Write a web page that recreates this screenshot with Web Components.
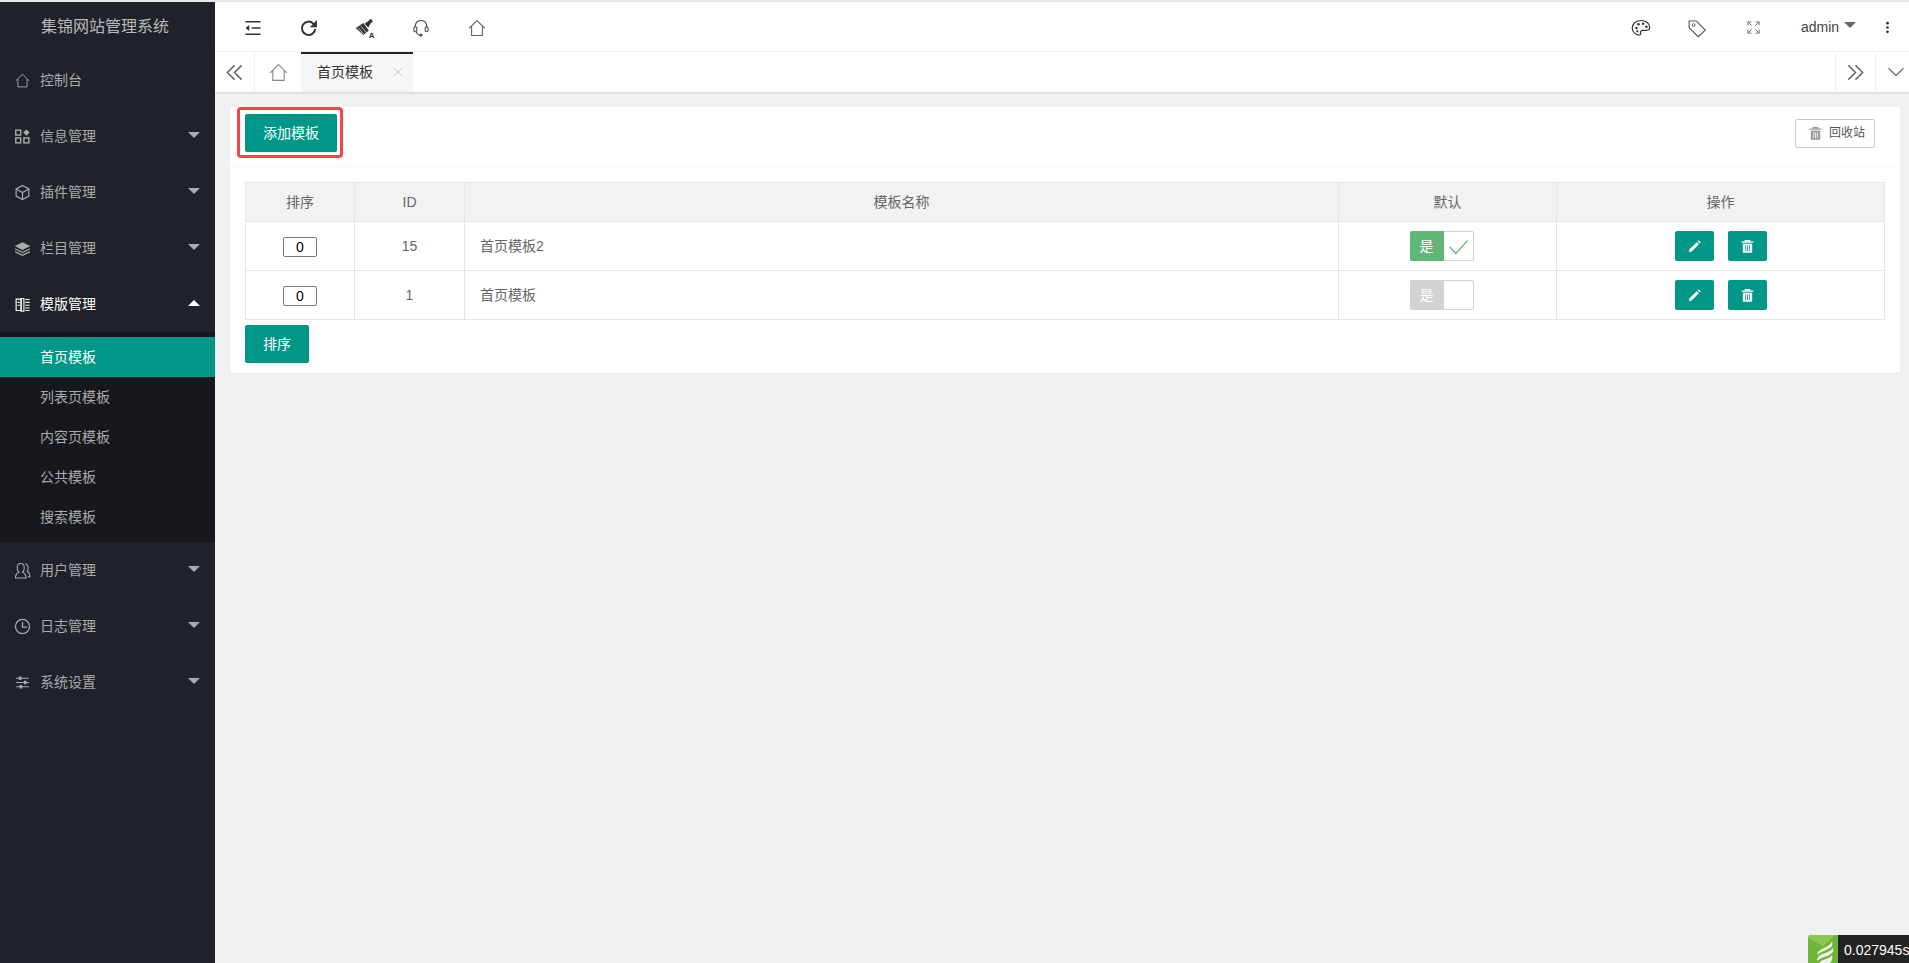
<!DOCTYPE html>
<html lang="zh-CN"><head><meta charset="utf-8"><title>集锦网站管理系统</title>
<style>
html,body{margin:0;height:100%;overflow:hidden}
body{font:14px/20px "Liberation Sans","Noto Sans CJK SC",sans-serif;color:#666;background:#f1f1f1}
</style></head><body>
<x-app>
  <x-sidebar slot="side" title-text="集锦网站管理系统">
    <x-nav-item icon="home" label="控制台" plain></x-nav-item>
    <x-nav-item icon="apps" label="信息管理"></x-nav-item>
    <x-nav-item icon="cube" label="插件管理"></x-nav-item>
    <x-nav-item icon="layers" label="栏目管理"></x-nav-item>
    <x-nav-item icon="template" label="模版管理" open>
      <x-sub-item active>首页模板</x-sub-item>
      <x-sub-item>列表页模板</x-sub-item>
      <x-sub-item>内容页模板</x-sub-item>
      <x-sub-item>公共模板</x-sub-item>
      <x-sub-item>搜索模板</x-sub-item>
    </x-nav-item>
    <x-nav-item icon="user" label="用户管理"></x-nav-item>
    <x-nav-item icon="clock" label="日志管理"></x-nav-item>
    <x-nav-item icon="sliders" label="系统设置"></x-nav-item>
  </x-sidebar>
  <x-topbar slot="top"></x-topbar>
  <x-tabbar slot="top"></x-tabbar>
  <x-template-card></x-template-card>
</x-app>
<x-trace></x-trace>
<script>
const ICONS = {
  home:'<path d="M2.500 12.500 12 3l9.500 9.500M5.500 10v11h13V10" fill="none" stroke="currentColor" stroke-width="1.300"/>',
  apps:'<g fill="none" stroke="currentColor" stroke-width="2"><rect x="2.500" y="3" width="7" height="7"/><rect x="2.500" y="14" width="7" height="7"/><rect x="14" y="14" width="7" height="7"/></g><path d="M17.500 2 22 6.500 17.500 11 13 6.500z" fill="currentColor"/>',
  cube:'<g fill="none" stroke="currentColor" stroke-width="1.700"><path d="M12 2 21 7v10l-9 5-9-5V7z"/><path d="M3.500 7.500 12 12l8.500-4.500M12 12v10"/></g>',
  layers:'<g fill="currentColor"><path d="M12 3 23 8.500 12 14 1 8.500z"/><path d="M1.500 11.500 12 16.500l10.500-5V13.500L12 18.500 1.500 13.500z"/><path d="M1.500 15.500 12 20.500l10.500-5v2L12 22.500l-10.500-5z"/></g>',
  template:'<g fill="none" stroke="currentColor" stroke-width="1.600"><path d="M3 4.500h7v16H3z"/><path d="M10 3.500h4v18h-4z"/></g><path d="M16 5h6M16 9h6M16 13h6M16 17h6M16 20.500h6M5 9h3M5 13h3" stroke="currentColor" stroke-width="1.500" fill="none"/>',
  user:'<g fill="none" stroke="currentColor" stroke-width="1.500"><path d="M2 22.500c0-4.500 2.500-7 5-8-2-1.500-2.500-3.500-2.500-6C4.500 4.500 6.500 2 9.500 2s5 2.500 5 6.500c0 2.500-.5 4.500-2.500 6 2.500 1 5 3.500 5 8z"/><path d="M15.500 2.500c3 .5 4.500 3 4.500 6 0 2-.5 3.500-1.500 5 2.500 1 4 3.500 4 7.500h-3"/></g>',
  clock:'<g fill="none" stroke="currentColor" stroke-width="1.800"><circle cx="12" cy="12" r="10"/><path d="M12 5.500V13h6.500"/></g>',
  sliders:'<path d="M3 6h18M3 12h18M3 18h18" stroke="currentColor" stroke-width="1.700"/><g fill="currentColor"><rect x="7" y="3.500" width="3.500" height="5"/><rect x="14" y="9.500" width="3.500" height="5"/><rect x="8" y="15.500" width="3.500" height="5"/></g>',
  shrink:'<path d="M3 4.500h18M10.500 12H21M3 19.500h18" stroke="currentColor" stroke-width="2"/><path d="M7.500 8.500v7L3 12z" fill="currentColor"/>',
  refresh:'<path d="M19.500 13a8 8 0 1 1-2.300-6.300L19 8.500" fill="none" stroke="currentColor" stroke-width="2.400"/><path d="M21.500 2.500v8.500H13z" fill="currentColor"/>',
  brush:'<g fill="currentColor"><path d="M1 12 10 6l6.500 9-6.500 5.500z"/><path d="M11.500 7 16 3.500 19 1l2.500 3-3 3-2.500 4.500z" /></g><path d="M4 11.500l6.500 8M7 9.500l6.500 8" stroke="#fff" stroke-width=".8"/><text x="16.500" y="23.500" font-size="9.500" font-weight="700" fill="currentColor" font-family="Liberation Sans">A</text>',
  headset:'<g fill="none" stroke="currentColor" stroke-width="1.300"><path d="M5 11C5 5.500 8 3 12 3s7 2.500 7 8"/><rect x="3.500" y="10.500" width="3.500" height="6" rx="1.700"/><rect x="17" y="10.500" width="3.500" height="6" rx="1.700"/><path d="M6.500 16.500c.5 3 2.500 4 4.500 4"/><circle cx="12" cy="20.500" r="1.200"/></g>',
  palette:'<path d="M12 3C6 3 1.500 7 1.500 12c0 5 4.500 8.500 8 8.500 2 0 2.500-1 2-2.500-.5-2 .5-3.200 2.500-3.200h4c2.500 0 4.500-1 4.500-3.300C22.500 6.500 18 3 12 3z" fill="none" stroke="currentColor" stroke-width="1.400"/><g fill="currentColor"><circle cx="6.500" cy="12" r="1.500"/><circle cx="9" cy="7.500" r="1.500"/><circle cx="14.500" cy="7" r="1.500"/><circle cx="18.500" cy="10.500" r="1.500"/><circle cx="7.500" cy="16" r="1.300"/></g>',
  tag:'<path d="M2.500 3.500h8.500L22 14.500 13.500 22.500 2.500 11.500z" fill="none" stroke="currentColor" stroke-width="1.300" stroke-linejoin="round"/><circle cx="8" cy="8.500" r="1.700" fill="none" stroke="currentColor" stroke-width="1.100"/>',
  full:'<g fill="none" stroke="currentColor" stroke-width="1.500"><path d="M3 8.500V3h5.500M3.500 3.500l5.500 5.500M15.500 3H21v5.500M20.500 3.500 15 9M3 15.500V21h5.500M3.500 20.500 9 15M21 15.500V21h-5.500M20.500 20.500 15 15"/></g>',
  dots:'<g fill="currentColor"><circle cx="12" cy="4" r="2.500"/><circle cx="12" cy="12" r="2.500"/><circle cx="12" cy="20" r="2.500"/></g>',
  dleft:'<path d="M12 3 3 12l9 9M21 3l-9 9 9 9" fill="none" stroke="currentColor" stroke-width="1.900"/>',
  dright:'<path d="M3 3l9 9-9 9M12 3l9 9-9 9" fill="none" stroke="currentColor" stroke-width="1.900"/>',
  down:'<path d="M2 7l10 10L22 7" fill="none" stroke="currentColor" stroke-width="1.500"/>',
  close:'<path d="M4 4l16 16M20 4 4 20" fill="none" stroke="currentColor" stroke-width="1.800"/>',
  check:'<path d="M2 12.500 9 20 22.500 5" fill="none" stroke="currentColor" stroke-width="1.400"/>',
  pencil:'<path d="M4 16.500 15.500 5l3.500 3.500L7.500 20 3 21z" fill="currentColor"/><path d="M17 3.500 18.500 2 22 5.500 20.500 7z" fill="currentColor"/>',
  trash:'<path d="M2.500 5h19M8.500 5V2.500h7V5" fill="none" stroke="currentColor" stroke-width="2"/><path d="M4.500 7.500h15V22h-15z" fill="currentColor"/><path d="M9 10v9.500M12 10v9.500M15 10v9.500" stroke="var(--cut,#009688)" stroke-width="1.300"/>'
};
const iconTpl=document.createElement('template');
iconTpl.innerHTML='<style>:host{display:inline-flex;flex:none;width:var(--s,16px);height:var(--s,16px);vertical-align:middle}svg{width:100%;height:100%;display:block;overflow:visible}</style><svg viewBox="0 0 24 24"></svg>';
customElements.define('x-icon',class extends HTMLElement{
  static get observedAttributes(){return ['name'];}
  constructor(){super();this.attachShadow({mode:'open'}).appendChild(iconTpl.content.cloneNode(true));}
  attributeChangedCallback(){this.shadowRoot.querySelector('svg').innerHTML=ICONS[this.getAttribute('name')]||'';}
});
function define(name, html, extra){
  const t=document.createElement('template'); t.innerHTML=html;
  customElements.define(name, class extends HTMLElement{
    constructor(){super();this.attachShadow({mode:'open'}).appendChild(t.content.cloneNode(true));}
    connectedCallback(){ extra && extra(this, this.shadowRoot); }
  });
}

define('x-app',`<style>
:host{display:grid;grid-template-columns:215px 1fr;grid-template-rows:auto 1fr;height:963px;box-sizing:border-box;border-top:2px solid #e8e8e8}
.side{grid-row:1/3;display:block}
.top{display:block;min-width:0}
.main{padding:15px 9px 15px 15px;min-width:0}
</style><div class="side"><slot name="side"></slot></div><div class="top"><slot name="top"></slot></div><div class="main"><slot></slot></div>`);

define('x-sidebar',`<style>
:host{display:block;height:100%;background:#20222a}
.logo{height:50px;box-sizing:border-box;padding:0 0 0 41px;font-size:16px;line-height:50px;color:#b9babd;white-space:nowrap}
</style><div class="logo"></div><slot></slot>`,(h,s)=>{s.querySelector('.logo').textContent=h.getAttribute('title-text');});

define('x-nav-item',`<style>
:host{display:block}
.row{height:56px;display:flex;align-items:center;padding:0 15px;color:#a9aaad;position:relative}
:host([open]) .row{color:#fff}
x-icon{--s:17px;margin:0 9px 0 -1px}
.label{flex:1;white-space:nowrap}
.caret{width:0;height:0;border:6px solid transparent;border-top-color:currentColor;border-bottom:0;margin-bottom:3px}
:host([open]) .caret{border-top:0;border-bottom:6px solid currentColor}
:host([plain]) .caret{display:none}
.sub{display:none;background:#16181d;padding:5px 0}
:host([open]) .sub{display:block}
</style><div class="row"><x-icon></x-icon><span class="label"></span><span class="caret"></span></div><div class="sub"><slot></slot></div>`,
(h,s)=>{s.querySelector('x-icon').setAttribute('name',h.getAttribute('icon'));s.querySelector('.label').textContent=h.getAttribute('label');});

define('x-sub-item',`<style>
:host{display:block;height:40px;line-height:40px;padding-left:40px;color:#a9aaad}
:host([active]){background:#009688;color:#fff}
</style><slot></slot>`);

define('x-topbar',`<style>
:host{display:flex;justify-content:space-between;height:50px;box-sizing:border-box;border-bottom:1px solid #f2f2f2;background:#fff;color:#333}
.g{display:flex;align-items:center}
.l{padding-left:10px}
.i{width:56px;height:100%;display:flex;align-items:center;justify-content:center}
.i x-icon{--s:20px;transform:translateY(1px)}
.admin{width:85px;padding-left:20px;box-sizing:border-box;display:flex;align-items:center;height:100%;color:#444}
.car{width:0;height:0;border:6px solid transparent;border-top-color:#666;border-bottom:0;margin-left:5px;margin-top:-3px}
.dots{width:43px;display:flex;justify-content:center;color:#333}
.dots x-icon{--s:13px;transform:translateY(1px)}
</style>
<div class="g l">
 <span class="i"><x-icon name="shrink"></x-icon></span>
 <span class="i"><x-icon name="refresh"></x-icon></span>
 <span class="i"><x-icon name="brush"></x-icon></span>
 <span class="i" style="color:#444"><x-icon name="headset"></x-icon></span>
 <span class="i" style="color:#666"><x-icon name="home"></x-icon></span>
</div>
<div class="g">
 <span class="i"><x-icon name="palette"></x-icon></span>
 <span class="i" style="color:#555"><x-icon name="tag"></x-icon></span>
 <span class="i" style="color:#666"><x-icon name="full" style="--s:15px"></x-icon></span>
 <span class="admin">admin<span class="car"></span></span>
 <span class="dots"><x-icon name="dots"></x-icon></span>
</div>`);

define('x-tabbar',`<style>
:host{display:flex;height:40px;background:#fff;box-shadow:0 1px 2px rgba(0,0,0,.12);position:relative;color:#666}
.b{display:flex;align-items:center;justify-content:center;box-sizing:border-box}
.prev{width:40px;border-right:1px solid #f2f2f2}
.home{width:46px;color:#888}
.tab{width:112px;background:#f6f6f6;border-top:2px solid #20222a;box-sizing:border-box;display:flex;align-items:center;padding:0 0 2px 16px;color:#333}
.tab span{width:56px;white-space:nowrap}
.tab x-icon{--s:12px;color:#c4c4c4;margin-left:19px}
.sp{flex:1}
.next{width:40px;border-left:1px solid #f2f2f2}
.dn{width:34px;border-left:1px solid #f2f2f2;padding-left:6px}
.prev x-icon,.next x-icon{--s:19px}
.home x-icon{--s:21px}
.dn x-icon{--s:18px}
</style>
<div class="b prev"><x-icon name="dleft"></x-icon></div>
<div class="b home"><x-icon name="home"></x-icon></div>
<div class="tab"><span>首页模板</span><x-icon name="close"></x-icon></div>
<div class="sp"></div>
<div class="b next"><x-icon name="dright"></x-icon></div>
<div class="b dn"><x-icon name="down"></x-icon></div>`);

define('x-btn',`<style>
:host{display:inline-block;height:38px;line-height:38px;padding:0 18px;background:#009688;color:#fff;border-radius:2px;white-space:nowrap;position:relative}
:host([marked])::after{content:"";position:absolute;inset:-7px -6px -6px -8px;border:3px solid #f44648;border-radius:4px;pointer-events:none}
</style><slot></slot>`);

define('x-icon-btn',`<style>
:host{display:inline-flex;align-items:center;justify-content:center;width:39px;height:30px;background:#009688;color:#fff;border-radius:2px}
x-icon{--s:15px}
</style><x-icon></x-icon>`,(h,s)=>{s.querySelector('x-icon').setAttribute('name',h.getAttribute('icon'));});

define('x-switch',`<style>
:host{display:inline-flex;width:64px;height:30px;box-sizing:border-box;border:1px solid #d2d2d2;border-radius:2px;background:#fff;vertical-align:top;margin-right:12px}
.a{width:34px;margin:-1px 0 -1px -1px;background:#d2d2d2;color:#fff;display:flex;align-items:center;justify-content:center;border-radius:2px 0 0 2px}
:host([on]) .a{background:#5fb878}
.c{flex:1;display:flex;align-items:center;justify-content:center;color:#5fb878;visibility:hidden}
:host([on]) .c{visibility:visible}
x-icon{--s:21px}
</style><span class="a">是</span><span class="c"><x-icon name="check"></x-icon></span>`);

define('x-template-card',`<style>
:host{display:block;background:#fff;border-radius:2px;box-shadow:0 1px 2px rgba(0,0,0,.05)}
.head{display:flex;align-items:center;justify-content:space-between;height:52px;padding:0 25px 7px 15px;border-bottom:1px solid #f6f6f6}
.recycle{display:flex;align-items:center;height:29px;box-sizing:border-box;width:80px;border:1px solid #c9c9c9;border-radius:2px;font-size:12px;padding-left:11px;color:#555}
.recycle x-icon{--s:15px;margin:0 6px 0 1px;color:#999;--cut:#fff}
.body{padding:15px 15px 10px}
table{border-collapse:collapse;width:1639px;table-layout:fixed}
th,td{border:1px solid #e6e6e6;padding:9px 15px;text-align:center;font-weight:400;color:#666;line-height:20px}
th{background:#f2f2f2}
td.n{text-align:left}
td{height:30px}
.ops{display:flex;justify-content:center;gap:14px}
.num{display:inline-block;width:34px;height:20px;box-sizing:border-box;border:1px solid #767676;border-radius:2px;color:#000;line-height:18px;vertical-align:middle;text-align:center}
.foot{margin-top:5px;display:block}
.foot x-btn{padding:0 18px;width:28px;text-align:center}
</style>
<div class="head">
  <x-btn marked>添加模板</x-btn>
  <div class="recycle"><x-icon name="trash"></x-icon>回收站</div>
</div>
<div class="body">
<table>
 <colgroup><col style="width:109px"><col style="width:110px"><col style="width:874px"><col style="width:218px"><col style="width:328px"></colgroup>
 <thead><tr><th>排序</th><th>ID</th><th>模板名称</th><th>默认</th><th>操作</th></tr></thead>
 <tbody>
 <tr><td><span class="num">0</span></td><td>15</td><td class="n">首页模板2</td><td><x-switch on></x-switch></td><td><div class="ops"><x-icon-btn icon="pencil"></x-icon-btn><x-icon-btn icon="trash"></x-icon-btn></div></td></tr>
 <tr><td><span class="num">0</span></td><td>1</td><td class="n">首页模板</td><td><x-switch></x-switch></td><td><div class="ops"><x-icon-btn icon="pencil"></x-icon-btn><x-icon-btn icon="trash"></x-icon-btn></div></td></tr>
 </tbody>
</table>
<div class="foot"><x-btn>排序</x-btn></div>
</div>`);

define('x-trace',`<style>
:host{position:fixed;right:0;bottom:0;display:flex;height:28px;font:14px/30px "Liberation Sans",sans-serif}
svg{width:30px;height:28px;display:block}
.t{width:71px;box-sizing:border-box;background:#232323;color:#fff;padding-left:6px;white-space:nowrap;overflow:hidden}
</style>
<svg viewBox="0 0 30 28"><path d="M3 0h27v28H0V3a3 3 0 0 1 3-3z" fill="#6eb53a"/><path d="M3 0h24L15 11 0 3a3 3 0 0 1 3-3z" fill="#8cc850"/>
<path d="M24 6c-1 5-8 6-13 10-1 1-2 2-2 4 4-4 12-5 15-9 .5-2 .5-3 0-5z" fill="#eef3ea"/><path d="M25 13c-2 4-10 5-14 8-1 1-2 3-2 5 4-4 11-4 15-8 1-1 1.500-3 1-5z" fill="#eef3ea"/><path d="M24 20c-2 3-7 4-11 6l-2 2h11c2-2 3-5 2-8z" fill="#eef3ea"/></svg>
<div class="t">0.027945s</div>`);
</script>
</body></html>
